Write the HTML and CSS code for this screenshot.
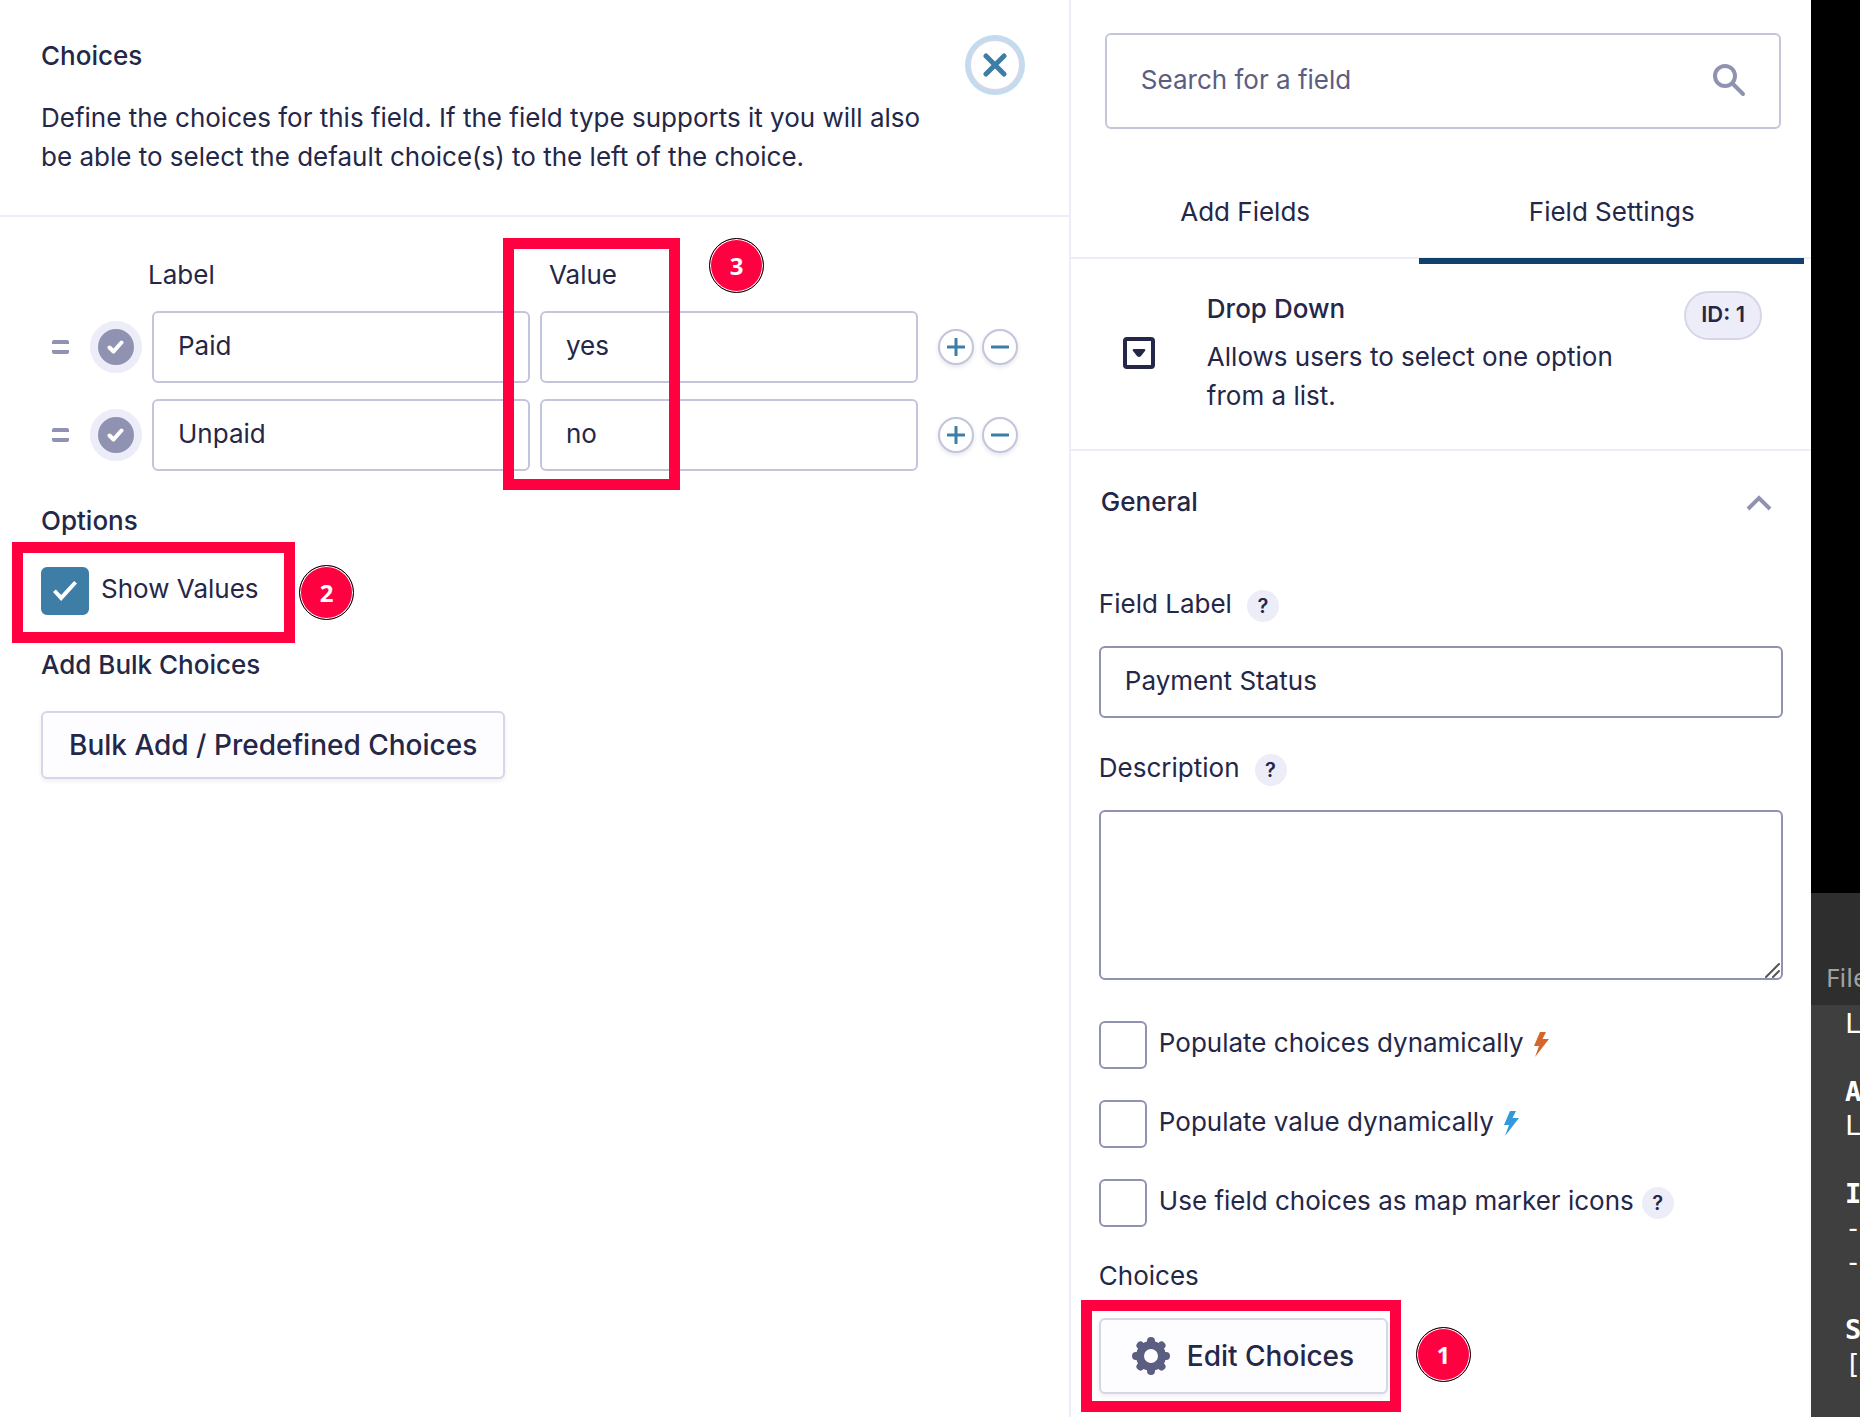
FILE: index.html
```html
<!DOCTYPE html>
<html lang="en">
<head>
    <meta charset="UTF-8">
    <meta name="viewport" content="width=device-width, initial-scale=1.0">
    <title>Form Editor - Choices</title>
    <link rel="stylesheet" href="styles.css">
</head>
<body>
    <div class="editor">
        <!-- Choices flyout -->
        <section class="flyout">
            <header class="flyout-header">
                <div class="flyout-intro">
                    <h2>Choices</h2>
                    <p>Define the choices for this field. If the field type supports it you will also be able to select the default choice(s) to the left of the choice.</p>
                </div>
                <button type="button" class="close" aria-label="Close">
                    <svg width="24" height="26" viewBox="0 0 24 26"><path d="M3 4l18 18M21 4L3 22"/></svg>
                </button>
            </header>

            <div class="flyout-body">
                <div class="choices">
                    <div class="choice-head">
                        <span id="col-label">Label</span>
                        <span id="col-value">Value</span>
                    </div>
                    <div class="choice-row">
                        <span class="handle"></span>
                        <button type="button" class="default-choice" aria-label="Default choice">
                            <svg width="18" height="14" viewBox="0 0 18 14"><path d="M2.500 7.500l4 4 8-9"/></svg>
                        </button>
                        <input type="text" class="text-input" aria-labelledby="col-label" value="Paid">
                        <input type="text" class="text-input" aria-labelledby="col-value" value="yes">
                        <div class="row-actions">
                            <button type="button" class="round" aria-label="Add choice"><svg width="18" height="18" viewBox="0 0 18 18"><path d="M1 9h16M9 1v16"/></svg></button>
                            <button type="button" class="round" aria-label="Remove choice"><svg width="18" height="18" viewBox="0 0 18 18"><path d="M1 9h16"/></svg></button>
                        </div>
                    </div>
                    <div class="choice-row">
                        <span class="handle"></span>
                        <button type="button" class="default-choice" aria-label="Default choice">
                            <svg width="18" height="14" viewBox="0 0 18 14"><path d="M2.500 7.500l4 4 8-9"/></svg>
                        </button>
                        <input type="text" class="text-input" aria-labelledby="col-label" value="Unpaid">
                        <input type="text" class="text-input" aria-labelledby="col-value" value="no">
                        <div class="row-actions">
                            <button type="button" class="round" aria-label="Add choice"><svg width="18" height="18" viewBox="0 0 18 18"><path d="M1 9h16M9 1v16"/></svg></button>
                            <button type="button" class="round" aria-label="Remove choice"><svg width="18" height="18" viewBox="0 0 18 18"><path d="M1 9h16"/></svg></button>
                        </div>
                    </div>
                    <div class="highlight highlight-value"></div>
                    <span class="step step-value">3</span>
                </div>

                <h3>Options</h3>
                <div class="option">
                    <input type="checkbox" id="show-values" class="check" checked>
                    <label for="show-values">Show Values</label>
                    <div class="highlight highlight-option"></div>
                    <span class="step step-option">2</span>
                </div>

                <h3>Add Bulk Choices</h3>
                <button type="button" class="btn btn-bulk">Bulk Add / Predefined Choices</button>
            </div>
        </section>

        <!-- Field settings sidebar -->
        <aside class="sidebar">
            <div class="search">
                <input type="text" aria-label="Search for a field" placeholder="Search for a field">
                <svg width="34" height="34" viewBox="0 0 34 34"><circle cx="13" cy="12" r="10"/><path d="M21 20l10 10"/></svg>
            </div>

            <nav class="tabs">
                <a href="#add">Add Fields</a>
                <a href="#settings" class="active">Field Settings</a>
            </nav>

            <div class="field-info">
                <svg class="field-icon" width="32" height="32" viewBox="0 0 32 32"><rect x="2" y="2" width="28" height="28" rx="2"/><path d="M11 12h10q2 0 1 2l-4 5q-2 2-4 0l-4-5q-1-2 1-2z"/></svg>
                <div class="field-text">
                    <h3>Drop Down</h3>
                    <p>Allows users to select one option from a list.</p>
                </div>
                <span class="field-id">ID: 1</span>
            </div>

            <div class="settings">
                <button type="button" class="accordion">
                    General
                    <svg width="26" height="18" viewBox="0 0 26 18"><path d="M2 16L13 5l11 11"/></svg>
                </button>

                <div class="label-row">
                    <label for="field-label">Field Label</label>
                    <button type="button" class="tip" aria-label="Help">?</button>
                </div>
                <input type="text" id="field-label" class="text-input strong" value="Payment Status">

                <div class="label-row">
                    <label for="description">Description</label>
                    <button type="button" class="tip" aria-label="Help">?</button>
                </div>
                <div class="text-area-wrap">
                    <textarea id="description" class="text-area"></textarea>
                    <svg class="grip" width="16" height="16" viewBox="0 0 16 16"><path d="M1 15L14 2M8 15l6-6"/></svg>
                </div>

                <div class="checks">
                    <div class="check-row">
                        <input type="checkbox" id="populate-choices" class="check">
                        <label for="populate-choices">Populate choices dynamically</label>
                        <svg class="bolt orange" width="15" height="26" viewBox="0 0 15 26"><path d="M6 0h6L8.500 7H15L1 25l4-11H0z"/></svg>
                    </div>
                    <div class="check-row">
                        <input type="checkbox" id="populate-value" class="check">
                        <label for="populate-value">Populate value dynamically</label>
                        <svg class="bolt blue" width="15" height="26" viewBox="0 0 15 26"><path d="M6 0h6L8.500 7H15L1 25l4-11H0z"/></svg>
                    </div>
                    <div class="check-row">
                        <input type="checkbox" id="map-icons" class="check">
                        <label for="map-icons">Use field choices as map marker icons</label>
                        <button type="button" class="tip" aria-label="Help">?</button>
                    </div>
                </div>

                <p class="choices-label">Choices</p>
                <div class="edit-choices">
                    <button type="button" class="btn btn-edit">
                        <svg width="40" height="40" viewBox="0 0 40 40">
                            <circle cx="20" cy="20" r="11" stroke-width="8"/>
                            <path stroke-width="8" d="M20 9V5M20 31v4M9 20H5M31 20h4M12 12l-2.500-2.500M28 12l2.500-2.500M12 28l-2.500 2.500M28 28l2.500 2.500"/>
                        </svg>
                        Edit Choices
                    </button>
                    <div class="highlight highlight-edit"></div>
                    <span class="step step-edit">1</span>
                </div>
            </div>
        </aside>

        <!-- Text editor window behind the form -->
        <div class="desktop">
            <div class="notepad-menu">File</div>
            <pre class="notepad-text">L

<b>A</b>
L

<b>I</b>
-
-

<b>S</b>
[</pre>
        </div>
    </div>
</body>
</html>
```
FILE: styles.css
```css
* {
    box-sizing: border-box;
}
body {
    margin: 0;
    font-family: Inter, sans-serif;
    font-size: 26px;
    line-height: 39px;
    color: #242748;
    background: #fff;
}
h2, h3, p {
    margin: 0;
    font-size: 26px;
}
h2, h3 {
    font-weight: 500;
}
button, input, textarea {
    font: inherit;
    color: inherit;
    margin: 0;
}
button {
    padding: 0;
    cursor: pointer;
}
svg {
    display: block;
    flex: none;
    fill: none;
    stroke-linecap: round;
    stroke-linejoin: round;
}
.editor {
    display: flex;
    min-height: 100vh;
    overflow: hidden;
}

/* flyout */
.flyout {
    flex: 1070;
    min-width: 0;
}
.flyout-header {
    display: flex;
    justify-content: space-between;
    padding: 35px 44px 39px 41px;
    border-bottom: 2px solid #ecedf8;
}
.flyout-intro {
    max-width: 900px;
}
.flyout-intro h2 {
    margin: 1px 0 23px;
}
.close {
    flex: none;
    display: flex;
    align-items: center;
    justify-content: center;
    width: 52px;
    height: 52px;
    margin: 4px;
    border: 2px solid #d5d7e9;
    border-radius: 50%;
    background: #fff;
    box-shadow: 0 0 0 4px #c0dcee;
}
.close svg {
    stroke: #3e7da6;
    stroke-width: 5;
}
.flyout-body {
    padding: 38px 51px 40px 41px;
}
.flyout-body h3 {
    margin-bottom: 27px;
}
.choices {
    position: relative;
    margin-bottom: 30px;
}
.choice-head {
    display: grid;
    grid-template-columns: 1fr 1fr;
    gap: 32px;
    padding: 0 100px 0 107px;
    margin-bottom: 17px;
}
.choice-row {
    display: flex;
    align-items: center;
    margin-bottom: 16px;
}
.handle {
    flex: none;
    width: 17px;
    height: 14px;
    margin: 0 21px 0 11px;
    border: solid #9092b2;
    border-width: 4px 0;
    border-radius: 2px;
}
.default-choice {
    flex: none;
    display: flex;
    align-items: center;
    justify-content: center;
    width: 52px;
    height: 52px;
    margin-right: 10px;
    border: 8px solid #ecedf8;
    border-radius: 50%;
    background: #9092b2;
}
.default-choice svg {
    stroke: #fff;
    stroke-width: 4;
}
.text-input {
    flex: 1;
    min-width: 0;
    width: 100%;
    height: 72px;
    padding: 0 24px 4px;
    border: 2px solid #c3c5db;
    border-radius: 6px;
    background: #fff;
}
.text-input + .text-input {
    margin-left: 10px;
}
.text-input.strong,
.text-area {
    border-color: #9092b2;
}
.row-actions {
    display: flex;
    gap: 8px;
    margin-left: 20px;
}
.round {
    display: flex;
    align-items: center;
    justify-content: center;
    width: 36px;
    height: 36px;
    border: 2px solid #c3c5db;
    border-radius: 50%;
    background: #fff;
    box-shadow: 0 2px 4px rgba(36, 39, 72, 0.12);
}
.round svg {
    stroke: #3e7da6;
    stroke-width: 3;
}
.option,
.check-row {
    display: flex;
    align-items: center;
    gap: 12px;
}
.option label,
.check-row label {
    padding-bottom: 5px;
}
.option {
    position: relative;
    margin-bottom: 30px;
}
.check {
    flex: none;
    appearance: none;
    width: 48px;
    height: 48px;
    border: 2px solid #9092b2;
    border-radius: 6px;
    background: #fff;
}
.check:checked {
    display: flex;
    align-items: center;
    justify-content: center;
    border-color: #3e7da6;
    background: #3e7da6;
}
.check:checked::before {
    content: "";
    width: 24px;
    height: 20px;
    background: #fff;
    clip-path: polygon(0 55%, 12% 42%, 34% 70%, 88% 0, 100% 12%, 34% 100%);
}
.btn {
    display: flex;
    align-items: center;
    justify-content: center;
    border: 2px solid #d5d7e9;
    border-radius: 6px;
    background: #fdfdff;
    font-size: 28px;
    font-weight: 500;
    box-shadow: 0 2px 4px rgba(36, 39, 72, 0.08);
}
.btn-bulk {
    height: 68px;
    padding: 0 26px;
}

/* sidebar */
.sidebar {
    flex: 741;
    min-width: 0;
    border-left: 2px solid #ecedf8;
}
.search {
    display: flex;
    align-items: center;
    height: 96px;
    margin: 33px 30px 0 34px;
    padding: 0 33px 0 34px;
    border: 2px solid #c3c5db;
    border-radius: 6px;
}
.search input {
    flex: 1;
    min-width: 0;
    padding: 0 0 4px;
    border: 0;
    outline: 0;
    background: none;
}
.search input::placeholder {
    color: #5b5e80;
    opacity: 1;
}
.search svg {
    stroke: #9092b2;
    stroke-width: 4;
}
.tabs {
    display: flex;
    height: 130px;
    padding-right: 7px;
    border-bottom: 2px solid #ecedf8;
}
.tabs a {
    position: relative;
    flex: 1 1 auto;
    padding-top: 63px;
    text-align: center;
    color: inherit;
    text-decoration: none;
}
.tabs a.active::after {
    content: "";
    position: absolute;
    right: 0;
    bottom: -7px;
    left: 0;
    height: 6px;
    background: #10406b;
}
.field-info {
    display: flex;
    align-items: flex-start;
    padding: 30px 49px 34px 52px;
    border-bottom: 2px solid #ecedf8;
}
.field-icon {
    margin: 48px 52px 0 0;
    fill: #242748;
}
.field-icon rect {
    fill: none;
    stroke: #242748;
    stroke-width: 4;
}
.field-text {
    flex: 1;
    padding-right: 50px;
}
.field-text h3 {
    margin-bottom: 9px;
}
.field-id {
    flex: none;
    height: 49px;
    margin-top: 2px;
    padding: 0 15px;
    border: 2px solid #d5d7e9;
    border-radius: 25px;
    background: #ecedf8;
    font-size: 22px;
    font-weight: 600;
    line-height: 43px;
}
.settings {
    padding: 31px 28px 0 28px;
}
.accordion {
    display: flex;
    align-items: center;
    justify-content: space-between;
    width: 100%;
    margin-bottom: 63px;
    padding: 0 11px 0 2px;
    border: 0;
    background: none;
    font-weight: 500;
}
.accordion svg {
    stroke: #9092b2;
    stroke-width: 4;
    stroke-linecap: butt;
    stroke-linejoin: miter;
}
.label-row {
    display: flex;
    align-items: flex-end;
    gap: 15px;
    margin-bottom: 23px;
}
.tip {
    flex: none;
    width: 32px;
    height: 32px;
    border: 0;
    border-radius: 50%;
    background: #ecedf8;
    font-size: 20px;
    font-weight: 600;
    line-height: 32px;
}
.label-row .tip {
    margin-bottom: 1px;
}
.check-row .tip {
    margin-left: -4px;
}
.text-input.strong {
    margin-bottom: 30px;
}
.text-area-wrap {
    position: relative;
}
.text-area {
    display: block;
    width: 100%;
    height: 170px;
    padding: 14px 24px;
    border-style: solid;
    border-width: 2px;
    border-radius: 6px;
    background: #fff;
    resize: none;
}
.grip {
    position: absolute;
    right: 2px;
    bottom: 2px;
    stroke: #555;
    stroke-width: 2;
}
.checks {
    display: grid;
    gap: 31px;
    margin: 41px 0 29px;
}
.bolt {
    margin-left: -2px;
}
.bolt.orange {
    fill: #d4652b;
}
.bolt.blue {
    fill: #3498db;
}
.choices-label {
    margin-bottom: 23px;
}
.edit-choices {
    position: relative;
}
.btn-edit {
    gap: 16px;
    height: 76px;
    padding: 0 32px 0 30px;
}
.btn-edit svg {
    stroke: #5b5e80;
}

/* numbered call-outs */
.highlight {
    position: absolute;
    border: 11px solid #ff0040;
    pointer-events: none;
}
.highlight-value {
    top: -17px;
    left: 462px;
    width: 177px;
    height: 252px;
}
.highlight-option {
    top: -25px;
    left: -29px;
    width: 283px;
    height: 101px;
}
.highlight-edit {
    top: -18px;
    left: -18px;
    width: 320px;
    height: 112px;
}
.step {
    position: absolute;
    width: 55px;
    height: 55px;
    border: 1px solid #000;
    border-radius: 50%;
    background: #ff0040;
    box-shadow: inset 0 0 0 1px #fff;
    color: #fff;
    font: bold 24px/53px "Noto Sans", sans-serif;
    text-align: center;
}
.step-value {
    top: -17px;
    left: 668px;
}
.step-option {
    top: -2px;
    left: 258px;
}
.step-edit {
    top: 9px;
    left: 317px;
}

/* editor window on the right */
.desktop {
    flex: 49;
    min-width: 0;
    display: flex;
    flex-direction: column;
    overflow: hidden;
    background: #000;
    color: #fff;
}
.notepad-menu {
    height: 112px;
    margin-top: 893px;
    padding: 65px 0 0 15px;
    background: #2e2e2e;
    color: #a0a0a0;
    font-family: "Noto Sans", sans-serif;
}
.notepad-text {
    flex: 1;
    margin: 0;
    padding: 2px 0 0 34px;
    background: #3f3f3f;
    font: 27px/34px "DejaVu Sans Mono", monospace;
}
```
